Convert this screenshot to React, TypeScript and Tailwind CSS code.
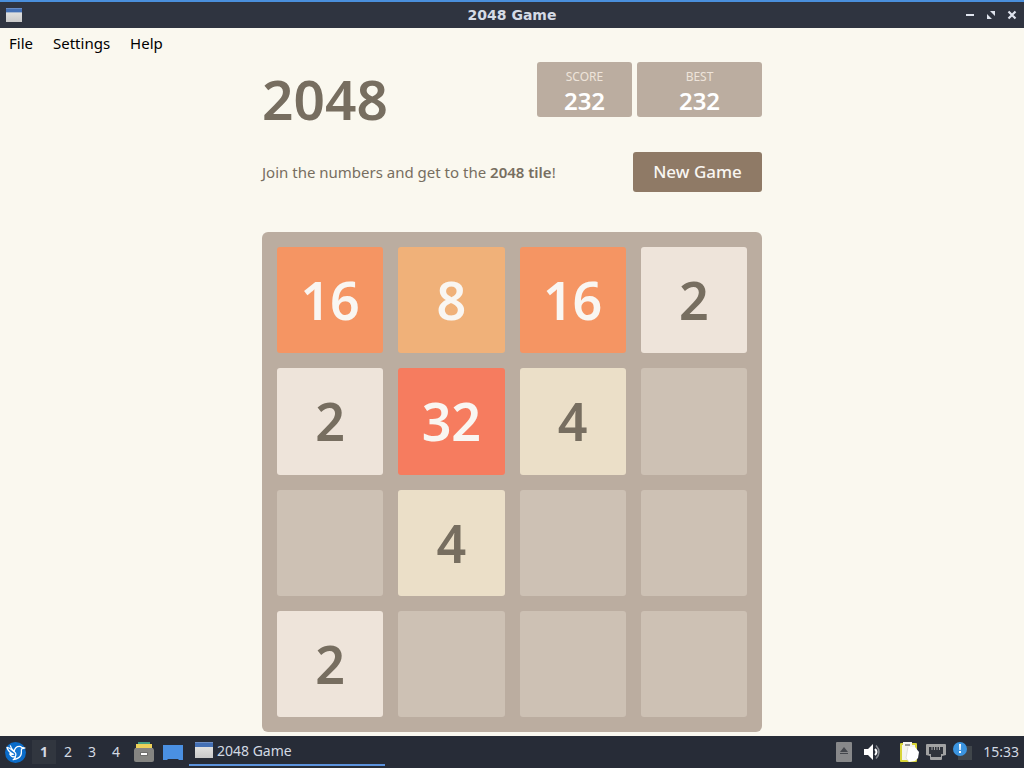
import type { ReactNode } from 'react';

const board: number[][] = [
  [16, 8, 16, 2],
  [2, 32, 4, 0],
  [0, 4, 0, 0],
  [2, 0, 0, 0],
];

const tileStyles: Record<number, string> = {
  0: 'bg-[#cdc1b4]',
  2: 'bg-[#eee4da] text-[#776e60]',
  4: 'bg-[#ebdfc8] text-[#776e60]',
  8: 'bg-[#f0b179] text-[#f9f6f2]',
  16: 'bg-[#f59563] text-[#f9f6f2]',
  32: 'bg-[#f67c5f] text-[#f9f6f2]',
};

function WindowIcon({ className }: { className: string }) {
  return (
    <svg viewBox="0 0 18 16" preserveAspectRatio="none" className={className} aria-hidden="true">
      <defs>
        <linearGradient id="pane" x1="0" y1="0" x2="0" y2="1">
          <stop offset="0" stopColor="#ececea" />
          <stop offset="1" stopColor="#c9c9c9" />
        </linearGradient>
      </defs>
      <rect width="18" height="16" fill="url(#pane)" />
      <rect width="18" height="5" fill="#4470b5" />
      <rect width="18" height="1" fill="#6d8fc6" />
    </svg>
  );
}

function TitleBar() {
  return (
    <header className="grid h-7 shrink-0 grid-cols-[1fr_auto_1fr] items-center border-t-2 border-[#4a8fdc] bg-[#2f3440] px-1.5 text-[#d5dbe6]">
      <WindowIcon className="h-3.5 w-4" />
      <h1 className="font-['DejaVu_Sans',sans-serif] text-sm font-bold">2048 Game</h1>
      <div className="flex justify-end gap-[9px]">
        <button type="button" aria-label="Minimize">
          <svg viewBox="0 0 12 12" className="size-3" fill="#dfe4ee" aria-hidden="true">
            <rect x="2" y="5" width="8" height="2" />
          </svg>
        </button>
        <button type="button" aria-label="Maximize">
          <svg viewBox="0 0 12 12" className="size-3" fill="#dfe4ee" aria-hidden="true">
            <path d="M5 2h5v5zM2 5v5h5z" />
          </svg>
        </button>
        <button type="button" aria-label="Close">
          <svg viewBox="0 0 12 12" className="size-3" stroke="#dfe4ee" strokeWidth="2.2" aria-hidden="true">
            <path d="M2.5 2.5l7 7M9.5 2.5l-7 7" />
          </svg>
        </button>
      </div>
    </header>
  );
}

function MenuBar() {
  return (
    <nav className="flex h-[30px] shrink-0 items-center gap-5 px-[9px] text-[15px] text-black">
      <button type="button">File</button>
      <button type="button">Settings</button>
      <button type="button">Help</button>
    </nav>
  );
}

function ScoreBox({ label, value, className }: { label: string; value: number; className: string }) {
  return (
    <div className={`flex h-[55px] flex-col items-center rounded-[3px] bg-[#bbada0] pt-[7px] ${className}`}>
      <span className="text-xs leading-4 text-[#eee4da]">{label}</span>
      <span className="text-2xl leading-8 font-semibold text-white">{value}</span>
    </div>
  );
}

function Game() {
  return (
    <main className="mx-auto w-full max-w-[500px] pt-1 text-[#776e60]">
      <div className="flex items-start justify-between">
        <h2 className="pt-1.5 text-[55px] leading-[62px] font-semibold">2048</h2>
        <div className="flex gap-[5px]">
          <ScoreBox label="SCORE" value={232} className="w-[95px]" />
          <ScoreBox label="BEST" value={232} className="w-[125px]" />
        </div>
      </div>
      <div className="mt-[22px] flex items-center justify-between">
        <p className="text-[15px]">
          Join the numbers and get to the <strong className="font-semibold">2048 tile</strong>!
        </p>
        <button
          type="button"
          className="h-10 w-[129px] rounded-[3px] bg-[#8f7a66] text-[17px] font-medium text-[#f9f6f2]"
        >
          New Game
        </button>
      </div>
      <div className="mt-10 grid grid-cols-4 gap-[15px] rounded-md bg-[#bbada0] p-[15px]">
        {board.flat().map((value, index) => (
          <div
            key={index}
            className={`flex aspect-square items-center justify-center rounded-[3px] text-[52px] leading-none font-semibold ${tileStyles[value]}`}
          >
            {value || ''}
          </div>
        ))}
      </div>
    </main>
  );
}

function TrayIcon({ children, className }: { children: ReactNode; className: string }) {
  return (
    <svg viewBox="0 0 20 20" className={`size-5 shrink-0 ${className}`} aria-hidden="true">
      {children}
    </svg>
  );
}

function Taskbar() {
  return (
    <footer className="flex h-8 shrink-0 items-center bg-[#272c37] pr-[5px] pl-[5px] text-sm text-[#d3dae3]">
      <button type="button" aria-label="Applications">
        <svg viewBox="0 0 22 22" className="size-[21px]" aria-hidden="true">
          <circle cx="11" cy="11" r="11" fill="#0b6cc9" />
          <path
            d="M2 5.500C5 6 7 8 9.500 10c.5-3 2.500-5.500 5.500-5.500 1.500 0 2 .5 2.500 1.200l3.500.6-3.500.8c-1 1.500.5 4-1 6.900-1.500 2.800-4.500 4-8 4.500 1.500-1 2.300-2 2.500-3-3 .5-5-.7-6-3 1.500.6 3 .7 4 .3C5.500 11.500 3 9 2 5.500z"
            fill="#1475d2"
            stroke="#fff"
            strokeWidth="1.3"
            strokeLinejoin="round"
          />
          <path d="M5.500 3.500c.5 2.500 2 4.500 4 6.500M9.500 10c2 1.500 2.500 3.500 1 5.500" fill="none" stroke="#fff" strokeWidth="1.3" />
        </svg>
      </button>
      <div className="ml-1.5 flex">
        <button type="button" className="h-6 w-6 bg-[#31363f] font-bold">1</button>
        <button type="button" className="h-6 w-6">2</button>
        <button type="button" className="h-6 w-6">3</button>
        <button type="button" className="h-6 w-6">4</button>
      </div>
      <button type="button" aria-label="File manager" className="ml-1.5">
        <svg viewBox="0 0 20 20" className="size-5" aria-hidden="true">
          <rect x="4" width="12" height="4" fill="#45a184" />
          <rect x="2" y="2" width="16" height="5" fill="#edd259" />
          <path d="M1 6h18l1 2v10a2 2 0 0 1-2 2H2a2 2 0 0 1-2-2V8z" fill="#858582" />
          <rect x="6" y="10" width="8" height="4" rx="1" fill="#6e6e6c" />
          <rect x="7" y="11" width="6" height="2" fill="#fff" />
        </svg>
      </button>
      <button type="button" aria-label="Show desktop" className="ml-[9px]">
        <svg viewBox="0 0 20 20" className="size-5" aria-hidden="true">
          <path d="M0 3h20v15h-4l-1-1H5l-1 1H0z" fill="#4a90e2" />
        </svg>
      </button>
      <button type="button" className="ml-1.5 flex h-[30px] w-[196px] items-center gap-1 self-start border-b-2 border-[#5b92dc] pl-1.5">
        <WindowIcon className="h-4 w-[18px]" />
        <span className="pt-0.5">2048 Game</span>
      </button>
      <div className="ml-auto flex items-center">
        <TrayIcon className="mr-2">
          <rect x="2" width="16" height="20" rx="1" fill="#87888a" />
          <path d="M6 10l4-5 4 5zM6 11h8v1H6z" fill="#44474d" />
        </TrayIcon>
        <TrayIcon className="mr-[17px]">
          <path d="M2 7h4l5-5v16l-5-5H2z" fill="#fff" />
          <path d="M13 7q3 3 0 6" fill="none" stroke="#fff" strokeWidth="2" />
          <path d="M14 3.500q6 6.500 0 13" fill="none" stroke="#858990" strokeWidth="1.500" />
        </TrayIcon>
        <TrayIcon className="mr-[7px]">
          <rect x="1" y="1" width="17" height="19" rx="1" fill="#d8d438" />
          <rect x="3" y="3" width="13" height="15" fill="#f4f4ee" />
          <path d="M4 0h9v3H4z" fill="#f4f4f0" />
          <path d="M6 2h5v2H6z" fill="#999" />
          <path d="M9 5h7l4 5-1 6-3 3-6 1-3-4z" fill="#fff" />
          <path d="M9 5l-2 11 3 4" fill="none" stroke="#d5d5d0" strokeWidth=".7" />
        </TrayIcon>
        <TrayIcon className="mr-[7px]">
          <path d="M1 2h18a1 1 0 0 1 1 1v10l-4 1v3a1 1 0 0 1-1 1H5a1 1 0 0 1-1-1v-3l-4-1V3a1 1 0 0 1 1-1z" fill="#a1a2a3" />
          <path d="M3 5h14v7h-2v3H5v-3H3z" fill="#30343c" />
          <path d="M6 5v3M8.500 5v3M11 5v3M13.500 5v3" stroke="#a1a2a3" />
        </TrayIcon>
        <TrayIcon className="mr-2.5">
          <path d="M9 4h10v14H5v-4z" fill="#40464b" />
          <circle cx="7" cy="7" r="7" fill="#3b94df" />
          <path d="M6 2h2l-.3 6H6.300zM6 9h2v2H6z" fill="#fff" />
        </TrayIcon>
        <time>15:33</time>
      </div>
    </footer>
  );
}

export default function App() {
  return (
    <div className="flex min-h-screen flex-col bg-[#faf8ef] font-['Noto_Sans',sans-serif]">
      <TitleBar />
      <MenuBar />
      <div className="grow">
        <Game />
      </div>
      <Taskbar />
    </div>
  );
}
